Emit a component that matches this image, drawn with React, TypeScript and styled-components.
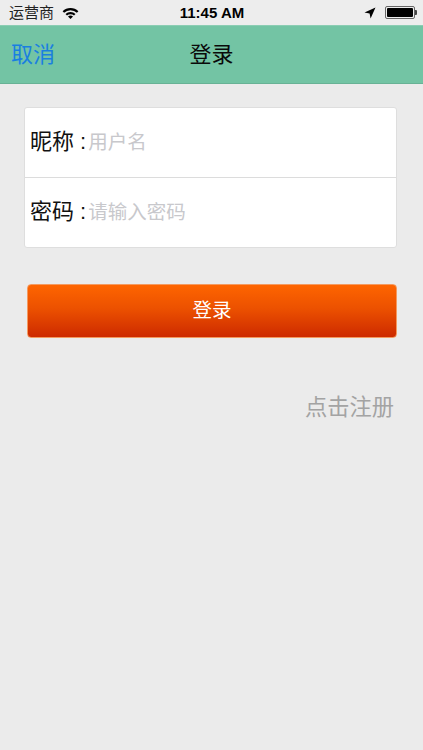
import { createGlobalStyle } from 'styled-components'
import styled from 'styled-components'

const GlobalStyle = createGlobalStyle`
  html, body {
    margin: 0;
    padding: 0;
    background: #ebebeb;
  }
  * {
    box-sizing: border-box;
  }
  input::placeholder {
    color: #c8c8cc;
    opacity: 1;
  }
`

const WifiIcon = () => (
  <svg width="17" height="12" viewBox="0 0 17 12">
    <path d="M0.6 4.2a11.2 11.2 0 0 1 15.8 0l-1.5 1.6a9 9 0 0 0-12.8 0z" fill="#000" />
    <path d="M3.5 7.1a7.1 7.1 0 0 1 10 0l-1.5 1.5a5 5 0 0 0-7 0z" fill="#000" />
    <path d="M6 9.6a3.6 3.6 0 0 1 5 0L8.5 12z" fill="#000" />
  </svg>
)

const LocationIcon = () => (
  <svg width="12" height="12" viewBox="0 0 12 12">
    <path d="M11.5 0.5L0.5 5.4L5.6 6.4L6.6 11.5z" fill="#000" />
  </svg>
)

const Battery = () => (
  <BatteryWrap>
    <BatteryBody>
      <BatteryFill />
    </BatteryBody>
    <BatteryTip />
  </BatteryWrap>
)

const App = () => {
  return (
    <>
      <GlobalStyle />
      <Page>
        <StatusBar>
          <StatusLeft>
            <Carrier>运营商</Carrier>
            <WifiIcon />
          </StatusLeft>
          <Clock>11:45 AM</Clock>
          <StatusRight>
            <LocationIcon />
            <Battery />
          </StatusRight>
        </StatusBar>
        <NavBar>
          <CancelLink>取消</CancelLink>
          <NavTitle>登录</NavTitle>
        </NavBar>
        <Content>
          <FormCard>
            <FieldRow>
              <FieldLabel>昵称 :</FieldLabel>
              <FieldInput placeholder="用户名" />
            </FieldRow>
            <FieldRow $divided>
              <FieldLabel>密码 :</FieldLabel>
              <FieldInput type="text" placeholder="请输入密码" />
            </FieldRow>
          </FormCard>
          <LoginButton>登录</LoginButton>
          <RegisterLink>点击注册</RegisterLink>
        </Content>
      </Page>
    </>
  )
}

const Page = styled.div`
  width: 423px;
  height: 750px;
  overflow: hidden;
  background: #ebebeb;
  font-family: "Liberation Sans", "Noto Sans CJK SC", sans-serif;
`

const StatusBar = styled.div`
  height: 25px;
  padding: 0 6px 0 9px;
  display: grid;
  grid-template-columns: 1fr auto 1fr;
  align-items: center;
  background: #ededed;
  color: #000;
`

const StatusLeft = styled.div`
  display: flex;
  align-items: center;
  gap: 8px;
`

const Carrier = styled.span`
  font-size: 15px;
  line-height: 18px;
  color: #222;
`

const Clock = styled.span`
  font-size: 15px;
  font-weight: 700;
  line-height: 18px;
  margin-right: 2px;
`

const StatusRight = styled.div`
  display: flex;
  align-items: center;
  justify-content: flex-end;
  gap: 9px;
`

const BatteryWrap = styled.div`
  display: flex;
  align-items: center;
`

const BatteryBody = styled.div`
  width: 30px;
  height: 13px;
  padding: 1px;
  border: 1px solid #666;
  border-radius: 2px;
`

const BatteryFill = styled.div`
  width: 100%;
  height: 100%;
  background: #000;
  border-radius: 1px;
`

const BatteryTip = styled.div`
  width: 2px;
  height: 5px;
  background: #444;
  border-radius: 0 1px 1px 0;
`

const NavBar = styled.div`
  position: relative;
  height: 59px;
  padding-left: 11px;
  display: flex;
  align-items: center;
  background: #73c4a4;
  border-top: 1px solid #8bcdb3;
  border-bottom: 1px solid #68b295;
`

const CancelLink = styled.a`
  font-size: 22px;
  line-height: 30px;
  color: #1a7fe0;
`

const NavTitle = styled.div`
  position: absolute;
  left: 0;
  right: 0;
  text-align: center;
  font-size: 22px;
  line-height: 30px;
  color: #0a0a0a;
`

const Content = styled.div`
  padding: 23px 26px 0 24px;
  display: flex;
  flex-direction: column;
`

const FormCard = styled.div`
  height: 141px;
  display: flex;
  flex-direction: column;
  background: #fff;
  border: 1px solid #dedede;
  border-radius: 3px;
`

const FieldRow = styled.div<{ $divided?: boolean }>`
  flex: 1;
  display: flex;
  align-items: center;
  padding: 0 0 2px 5px;
  border-top: ${(p) => (p.$divided ? '1px solid #dcdcdc' : 'none')};
`

const FieldLabel = styled.span`
  font-size: 22px;
  line-height: 30px;
  color: #111;
  white-space: nowrap;
`

const FieldInput = styled.input`
  flex: 1;
  min-width: 0;
  margin-left: 2px;
  padding: 0;
  border: none;
  outline: none;
  background: transparent;
  font-family: inherit;
  font-size: 19.5px;
  line-height: 28px;
  color: #111;
`

const LoginButton = styled.button`
  height: 54px;
  margin: 36px 0 0 3px;
  padding: 0 0 5px;
  border: 1px solid #f49a60;
  border-radius: 4px;
  background: linear-gradient(180deg, #fe6500 0%, #ec5100 45%, #cd2a00 100%);
  color: #fff;
  font-family: inherit;
  font-size: 19.5px;
`

const RegisterLink = styled.a`
  align-self: flex-end;
  margin: 55px 3px 0 0;
  font-size: 22.25px;
  line-height: 30px;
  color: #a3a3a3;
`

export default App
